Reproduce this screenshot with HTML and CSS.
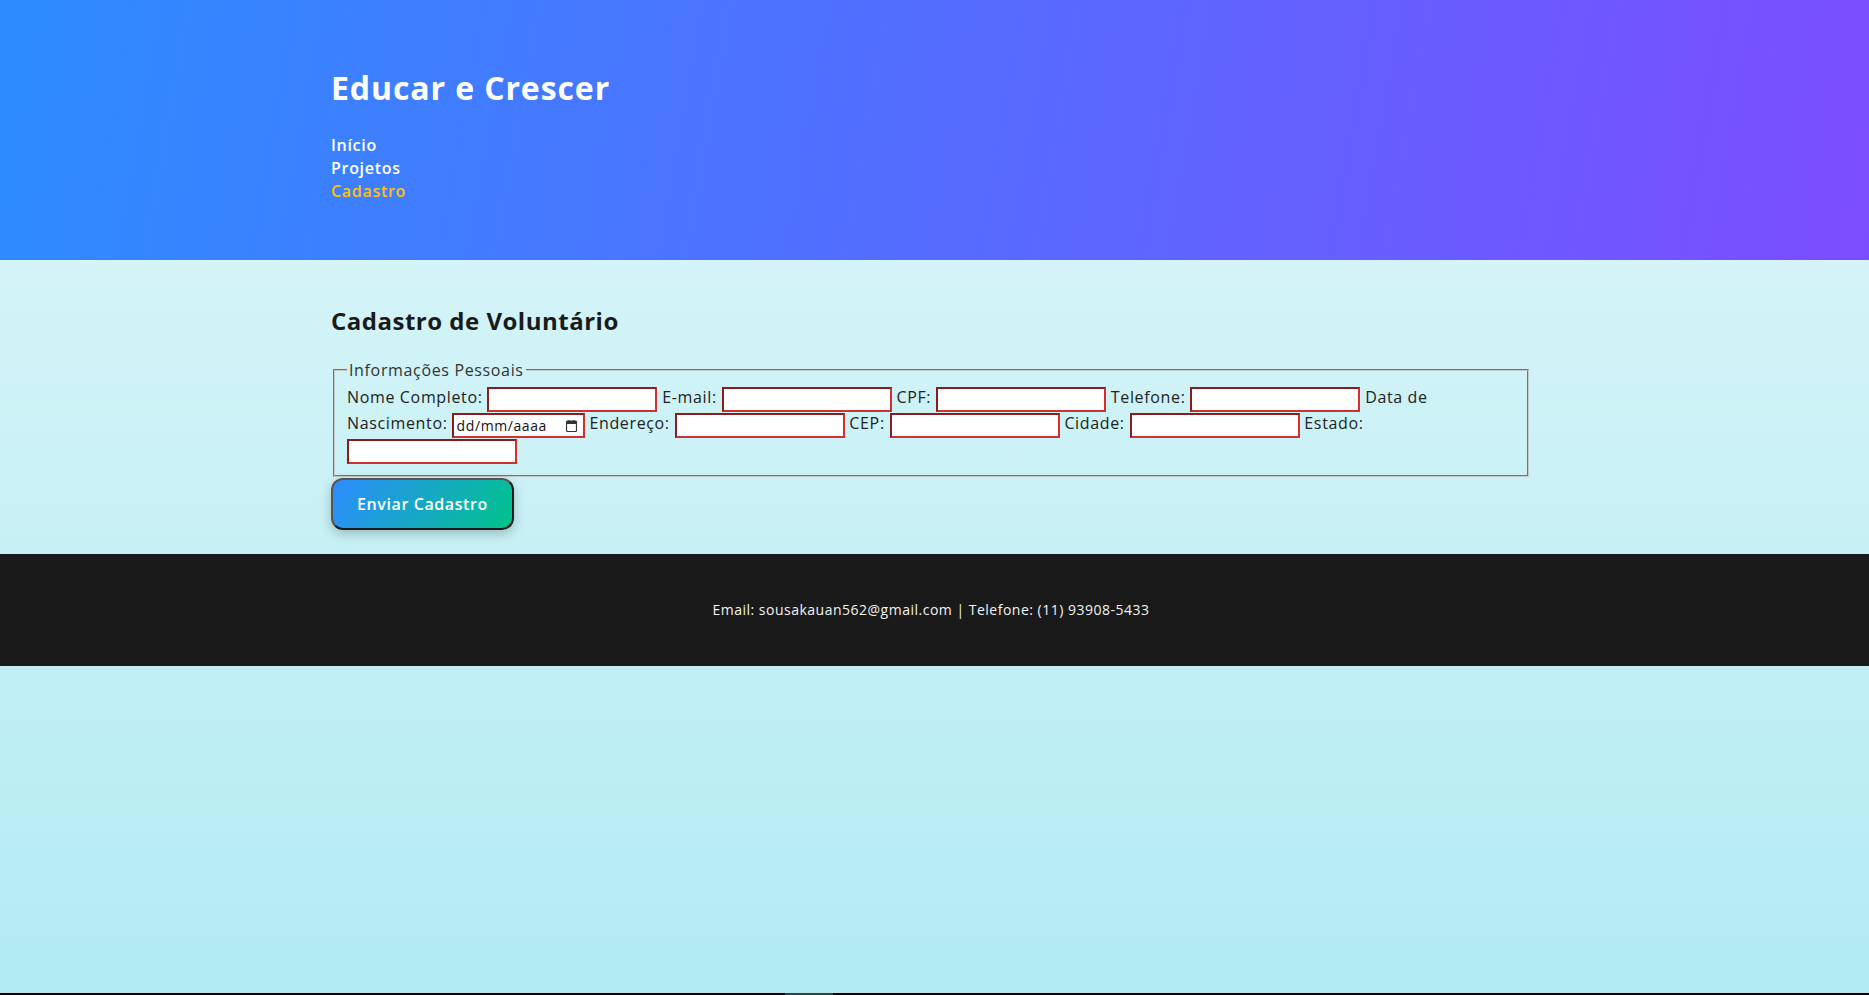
FILE: index.html
```html
<!DOCTYPE html>
<html lang="pt-BR">
<head>
<meta charset="utf-8">
<title>Educar e Crescer</title>
<link rel="stylesheet" href="styles.css">
</head>
<body>
<header class="site-header">
  <div class="container">
    <h1 class="brand">Educar e Crescer</h1>
    <nav>
      <ul class="nav">
        <li><a href="#">Início</a></li>
        <li><a href="#">Projetos</a></li>
        <li><a class="active" href="#">Cadastro</a></li>
      </ul>
    </nav>
  </div>
</header>
<main class="content">
  <div class="container">
    <h2 class="page-title">Cadastro de Voluntário</h2>
    <form class="form">
      <fieldset class="personal">
        <legend>Informações Pessoais</legend>
        <label>Nome Completo:</label> <input class="field" type="text"> <label>E-mail:</label> <input class="field" type="text"> <label>CPF:</label> <input class="field" type="text"> <label>Telefone:</label> <input class="field" type="text"> <label>Data de<br>Nascimento:</label><span class="date-field"><span class="date-text">dd/mm/aaaa</span><svg class="cal" width="11" height="12" viewBox="0 0 11 12"><rect x="0.5" y="1" width="10" height="10.5" rx="1.2" fill="none" stroke="#333" stroke-width="1.2"/><rect x="0.5" y="1" width="10" height="3" fill="#333"/><rect x="2.5" y="0" width="1.2" height="2" fill="#333"/><rect x="7.3" y="0" width="1.2" height="2" fill="#333"/></svg></span> <label>Endereço:</label> <input class="field" type="text"> <label>CEP:</label> <input class="field" type="text"> <label>Cidade:</label> <input class="field" type="text"> <label>Estado:</label><br><input class="field" type="text">
      </fieldset>
      <button class="submit" type="button">Enviar Cadastro</button>
    </form>
  </div>
</main>
<footer class="site-footer">
  <p class="contact">Email: sousakauan562@gmail.com | Telefone: (11) 93908-5433</p>
</footer>
<div class="hscroll"><span class="thumb"></span></div>
</body>
</html>
```
FILE: styles.css
```css
html, body {
  margin: 0;
  padding: 0;
}
body {
  font-family: "Open Sans", "Noto Sans", sans-serif;
  font-size: 16px;
  line-height: 1.5;
  color: #222;
  min-height: 100vh;
  background: linear-gradient(to bottom, #e0f7fa, #b2ebf2);
}
.container {
  width: 1200px;
  margin: 0 auto;
}
.site-header {
  box-sizing: border-box;
  height: 260px;
  padding: 64px 7px 0 0;
  background: linear-gradient(100deg, #2d8cff 0%, #7c4dff 100%);
}
.brand {
  margin: 0;
  font-size: 32px;
  line-height: 48px;
  font-weight: 700;
  color: #fff;
  letter-spacing: 0.9px;
}
.nav {
  list-style: none;
  margin: 22px 0 0;
  padding: 0;
}
.nav li {
  line-height: 23px;
}
.nav a {
  color: #fff;
  text-decoration: none;
  font-weight: 600;
  font-size: 16px;
  letter-spacing: 0.7px;
}
.nav a.active {
  color: #ffc107;
}
.content {
  padding: 43px 7px 24px 0;
}
.page-title {
  margin: 0 0 19px;
  font-size: 24px;
  line-height: 36px;
  font-weight: 700;
  color: #1a1a1a;
  letter-spacing: 0.5px;
}
.form {
  margin: 0;
}
.personal {
  margin: 0 2px;
  padding: 2px 12px 13px;
  border: 2px groove #c8c8c8;
  line-height: 26px;
  color: #222;
  letter-spacing: 0.65px;
}
.personal legend {
  padding: 0 2px;
  line-height: 24px;
  color: #333;
}
.field {
  box-sizing: border-box;
  width: 170px;
  height: 25px;
  margin: -1px 0 -3px;
  padding: 1px 2px;
  vertical-align: middle;
  background: #fff;
  border-style: solid;
  border-width: 2px;
  border-color: #8e1b1b #d32f2f #d32f2f #8e1b1b;
  font-family: inherit;
  font-size: 14px;
  line-height: 19px;
}
.date-field {
  box-sizing: border-box;
  display: inline-flex;
  align-items: center;
  justify-content: space-between;
  width: 133px;
  height: 25px;
  margin: -1px 0 -3px 4px;
  padding: 0 6px 0 3px;
  vertical-align: middle;
  background: #fff;
  border-style: solid;
  border-width: 2px;
  border-color: #8e1b1b #d32f2f #d32f2f #8e1b1b;
  font-size: 14px;
  line-height: 19px;
  color: #111;
  letter-spacing: 0.6px;
}
.cal {
  display: block;
}
.submit {
  display: block;
  margin: 1px 0 0;
  padding: 12px 24px;
  font-family: inherit;
  font-size: 16px;
  line-height: 24px;
  font-weight: 600;
  color: #fff;
  letter-spacing: 0.6px;
  border-radius: 12px;
  border: 2px solid;
  border-color: #555 #1a1a1a #1a1a1a #555;
  background: linear-gradient(120deg, #2d8cff 0%, #00c38a 100%);
  box-shadow: 0 4px 12px rgba(0, 0, 0, 0.22);
}
.site-footer {
  background: #1a1a1a;
  padding: 45px 7px 46px 0;
  text-align: center;
}
.contact {
  margin: 0;
  font-size: 14px;
  line-height: 21px;
  color: #f2f2f2;
  letter-spacing: 0.5px;
}
.hscroll {
  position: fixed;
  left: 0;
  right: 0;
  bottom: 0;
  height: 2px;
  background: #000;
}
.hscroll .thumb {
  position: absolute;
  left: 785px;
  top: 0;
  width: 48px;
  height: 2px;
  background: #3c3c3c;
}
```
